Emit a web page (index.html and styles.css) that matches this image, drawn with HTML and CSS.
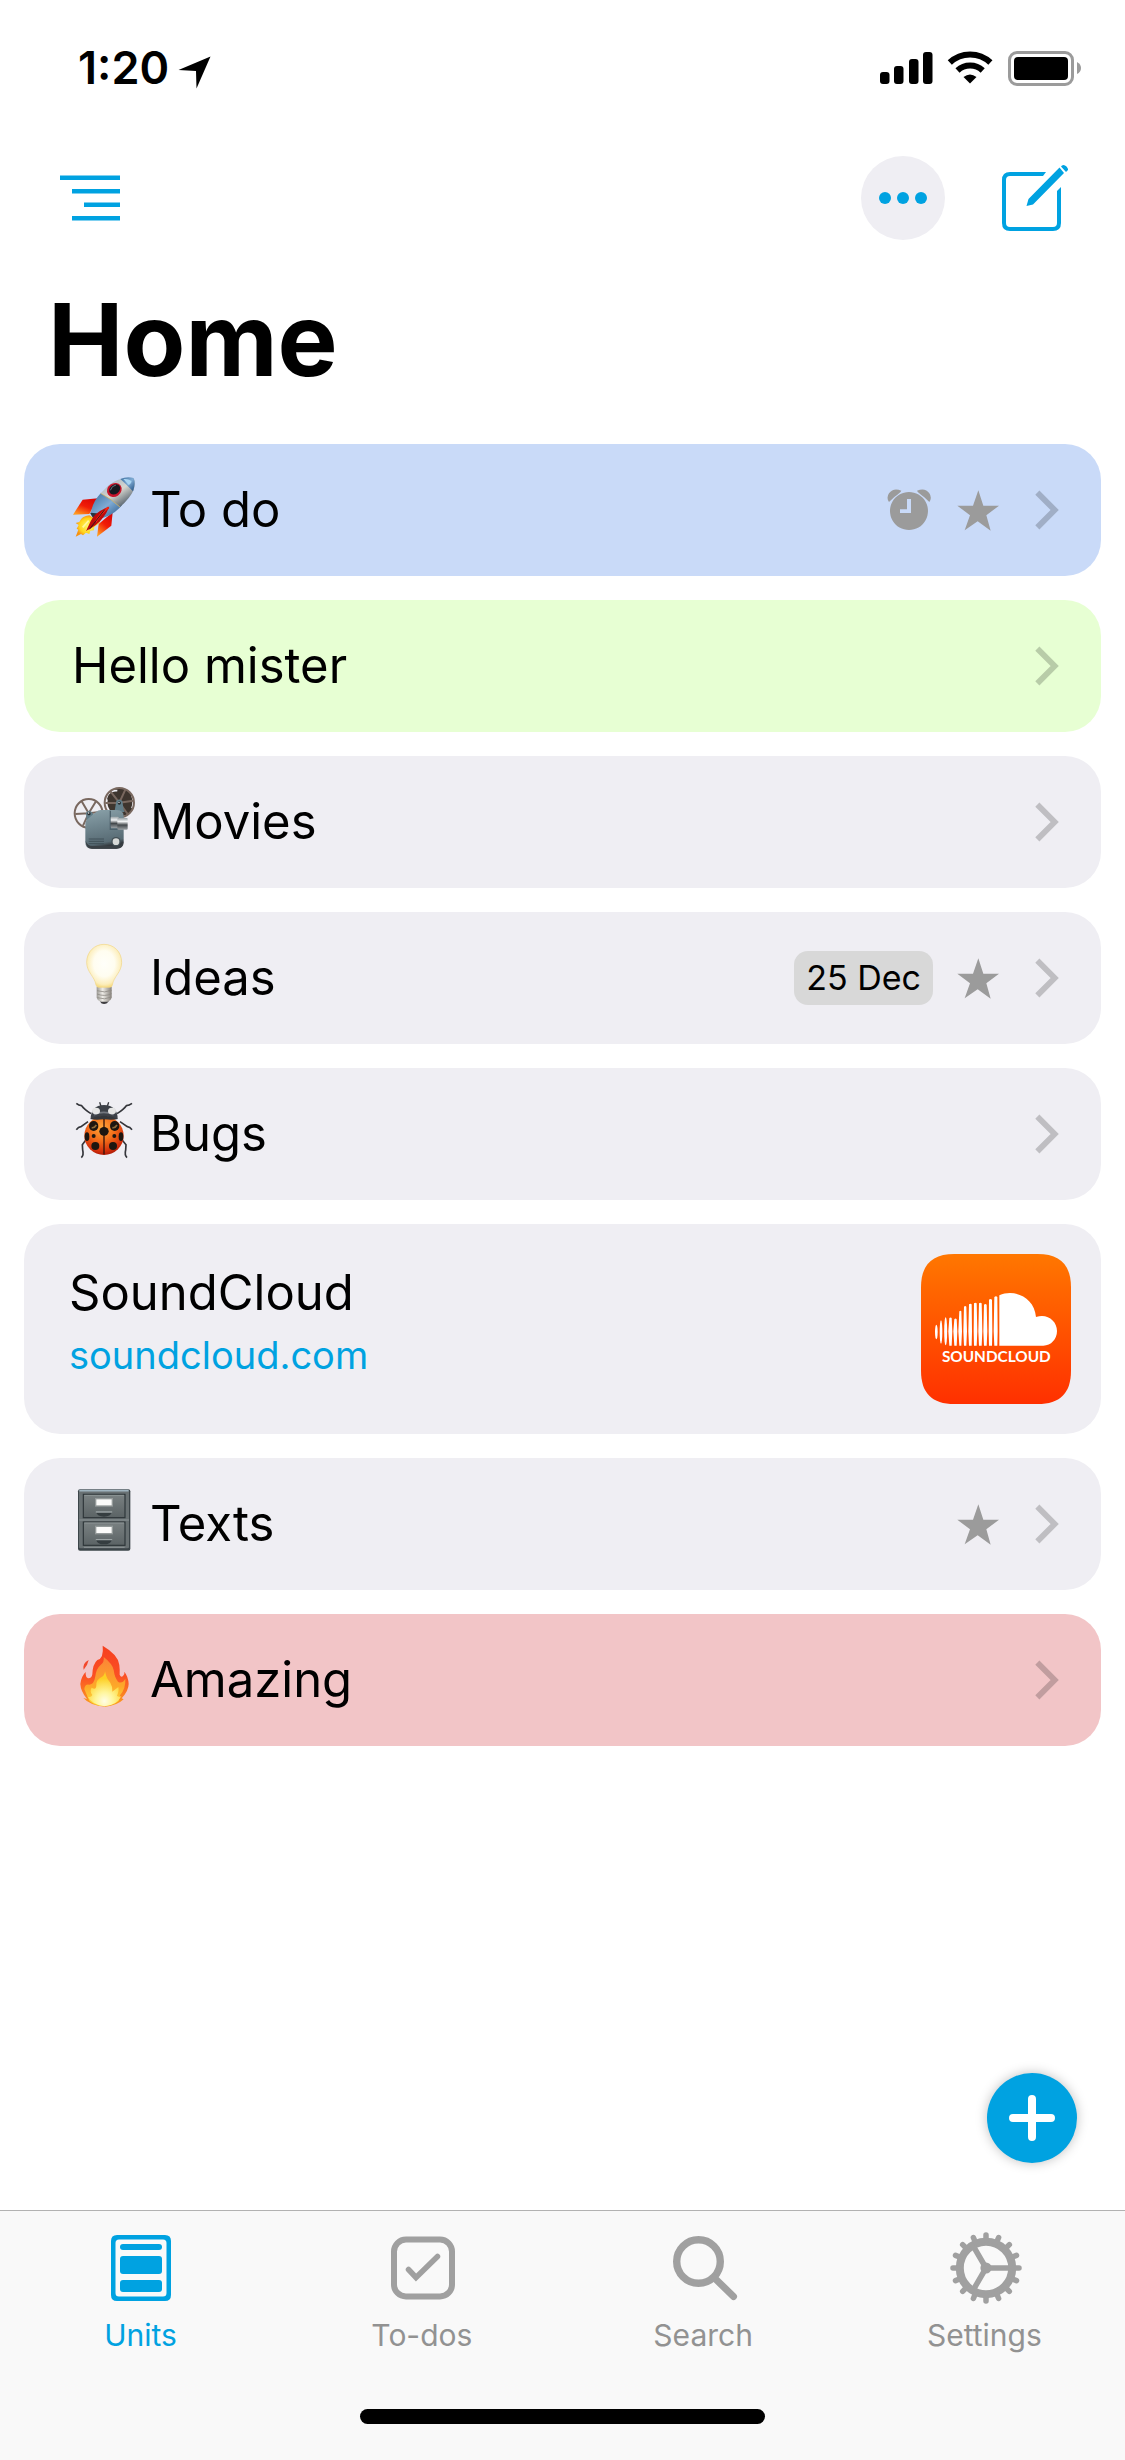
FILE: index.html
```html
<!DOCTYPE html>
<html lang="en">
<head>
<meta charset="utf-8">
<meta name="viewport" content="width=device-width, initial-scale=1">
<title>Home</title>
<link rel="stylesheet" href="styles.css">
</head>
<body>
<svg class="defs" aria-hidden="true">
  <defs>
    <symbol id="chevron" viewBox="789 177 108 126"><path d="M832 188 L884 240 L832 292" fill="none" stroke="#000" stroke-opacity=".2" stroke-width="17.500"/></symbol>
    <symbol id="star" viewBox="591 177 126 126"><path d="M655 181 L670 227 H717 L679 256 L692 302 L653 274 L614 301 L630 256 L592 227 H639 Z" fill="#9b9b9b"/></symbol>
  </defs>
</svg>

<div class="status">
  <div class="status-side">
    <span class="time">1:20</span>
    <svg class="location" viewBox="178 48 33 41" role="img" aria-label="Location in use"><path d="M178.500 70 L210.500 56.500 L196.500 88.500 L196 71 Z"/></svg>
  </div>
  <svg class="indicators" viewBox="880 48 202 42" role="img" aria-label="Signal, Wi-Fi and battery">
    <rect x="880" y="73" width="9.500" height="12" rx="3"/>
    <rect x="894" y="67" width="9.500" height="18" rx="3"/>
    <rect x="909" y="60" width="9.500" height="25" rx="3"/>
    <rect x="923" y="53" width="9.500" height="32" rx="3"/>
    <g fill="none" stroke="#000" stroke-width="6">
      <path d="M949.800 63.500 A29.500 29.500 0 0 1 990.400 63.500"/>
      <path d="M957.500 71.500 A18.400 18.400 0 0 1 982.700 71.500"/>
    </g>
    <path d="M963.500 78 Q970 73 976.500 78 L970 84.500 Z"/>
    <rect x="1009.500" y="53.500" width="63" height="32" rx="7.500" fill="none" stroke="#9b9b9b" stroke-width="3"/>
    <rect x="1014" y="58" width="54" height="23" rx="4"/>
    <path d="M1077 63 Q1081 65 1081 69 Q1081 73 1077 75 Z" fill="#9b9b9b"/>
  </svg>
</div>

<header>
  <div class="toolbar">
    <button class="icon-button" type="button" aria-label="Outline">
      <svg class="outline" viewBox="0 0 60 46" fill="#00a2e1"><path d="M0 0.500h60V5H0zM12 14h48v4.500H12zM24 27.500h36V32H24zM12 41h48v4.500H12z"/></svg>
    </button>
    <div class="toolbar-end">
      <button class="icon-button more" type="button" aria-label="More">
        <svg viewBox="0 0 48 12" fill="#00a2e1"><circle cx="6" cy="6" r="6"/><circle cx="24" cy="6" r="6"/><circle cx="42" cy="6" r="6"/></svg>
      </button>
      <button class="icon-button" type="button" aria-label="Compose">
        <svg class="compose" viewBox="1002 164 67 68">
          <path d="M1046 172 H1010 Q1002 172 1002 180 V223 Q1002 231 1010 231 H1053 Q1061 231 1061 223 V187 L1057 191 V223 Q1057 227 1053 227 H1010 Q1006 227 1006 223 V180 Q1006 176 1010 176 H1043 Z" fill="#00a2e1"/>
          <path d="M1026.500 206 L1028.500 199 L1059.500 167.500 L1064 173 L1033 204.500 Z M1061 166.500 L1062 165.500 Q1064 164 1066.500 166.500 Q1069 169.500 1067.500 170.500 L1066 172 Z" fill="#00a2e1"/>
        </svg>
      </button>
    </div>
  </div>
  <h1>Home</h1>
</header>

<main>
<ul class="units">
  <li><a class="unit blue" href="#todo">
    <svg class="emoji" viewBox="216 132 192 216" aria-hidden="true">
      <defs>
        <linearGradient id="rb" x1="0" y1="0" x2=".7" y2=".9"><stop offset="0" stop-color="#5b7e9e"/><stop offset=".35" stop-color="#b9c3c9"/><stop offset=".6" stop-color="#d6d6cf"/><stop offset="1" stop-color="#5c6873"/></linearGradient>
        <linearGradient id="rm" x1="0" y1="0" x2="1" y2="1"><stop offset="0" stop-color="#3c6f9f"/><stop offset=".5" stop-color="#7fabd4"/><stop offset="1" stop-color="#1f4d80"/></linearGradient>
        <linearGradient id="rf" x1=".8" y1="0" x2=".2" y2="1"><stop offset="0" stop-color="#d90606"/><stop offset=".5" stop-color="#f11c08"/><stop offset="1" stop-color="#ff9c20"/></linearGradient>
        <radialGradient id="ry"><stop offset="0" stop-color="#fff76a"/><stop offset=".7" stop-color="#ffd51c"/><stop offset="1" stop-color="#f69113"/></radialGradient>
      </defs>
      <path d="M294 205 L248 209 L219 254 L268 252 Z" fill="url(#rf)"/>
      <path d="M338 247 L334 287 L291 320 L296 282 Z" fill="url(#rf)"/>
      <path d="M302 190 Q276 218 272 252 Q280 268 300 266 Q338 258 366 226 Z" fill="url(#rm)"/>
      <path d="M270 248 l20 2 l14 18 l-18 8 Z" fill="#29343d"/>
      <path d="M268 256 Q245 258 238 276 L227 279 L236 285 L230 296 L235 299 L227 320 L243 312 L249 316 L258 308 L268 312 L271 302 L282 301 L283 291 L298 279 L303 264 L289 270 Z" fill="url(#ry)"/>
      <path d="M248 292 l18 -20 M260 300 l22 -22" stroke="#fff8a0" stroke-width="5"/>
      <path d="M401 144 Q360 138 326 166 L302 190 Q340 211 360 231 Q390 205 401 180 Q408 158 401 144Z" fill="url(#rb)"/>
      <path d="M401 144 Q380 139 361 147 Q376 161 399 184 Q408 158 401 144Z" fill="url(#rm)"/>
      <path d="M370 147 Q388 145 395 155 Q391 163 386 165Z" fill="#a8d4f2"/>
      <path d="M302 190 Q338 210 360 231" fill="none" stroke="#cfae60" stroke-width="2.500"/>
      <ellipse cx="343" cy="180" rx="23" ry="20" fill="#c8142b" transform="rotate(-35 343 180)"/>
      <ellipse cx="344" cy="178" rx="18" ry="14" fill="#16191f" transform="rotate(-35 344 178)"/>
      <path d="M331 181 Q335 167 348 165" fill="none" stroke="#62727e" stroke-width="3"/>
      <path d="M328 230 Q283 246 272 274 L258 303 Q294 285 310 262 Q322 246 328 230Z" fill="#bf0a0a"/>
      <path d="M326 232 Q300 250 287 276" fill="none" stroke="#f32412" stroke-width="6"/>
      <path d="M314 239 L268 298" stroke="#34191c" stroke-width="3"/>
    </svg>
    <span class="name">To do</span>
    <svg class="alarm" viewBox="381 171 138 138" role="img" aria-label="Reminder" fill="#9b9b9b">
      <path fill-rule="evenodd" d="M447 186 A57 57 0 1 1 446.900 186 Z M441 207 V238 H420 V249 H453 V207 Z"/>
      <path d="M387 216 Q378 203 387 190 Q400 172 424 182 Q421 188 403 201 Z M508 216 Q517 203 508 190 Q496 172 471 182 Q474 188 492 201 Z"/>
    </svg>
    <svg class="star" role="img" aria-label="Favourite"><use href="#star"/></svg>
    <svg class="chevron" aria-hidden="true"><use href="#chevron"/></svg>
  </a></li>

  <li><a class="unit green" href="#hello">
    <span class="name">Hello mister</span>
    <svg class="chevron" aria-hidden="true"><use href="#chevron"/></svg>
  </a></li>

  <li><a class="unit" href="#movies">
    <svg class="emoji" viewBox="216 138 192 216" aria-hidden="true">
      <defs>
        <linearGradient id="pb" x1="0" y1="0" x2=".2" y2="1"><stop offset="0" stop-color="#8ba2aa"/><stop offset=".45" stop-color="#70868f"/><stop offset=".9" stop-color="#586b74"/><stop offset="1" stop-color="#34393e"/></linearGradient>
        <linearGradient id="pl" x1="0" y1="0" x2="0" y2="1"><stop offset="0" stop-color="#98a1a5"/><stop offset=".3" stop-color="#f0f2f3"/><stop offset=".6" stop-color="#43484b"/><stop offset="1" stop-color="#9aa0a3"/></linearGradient>
      </defs>
      <ellipse cx="361" cy="187" rx="41" ry="42" fill="#3e352e"/>
      <path d="M322 163 Q336 150 352 152 M327 211 Q317 196 321 178 M396 166 Q403 184 396 205" stroke="#efeef3" stroke-width="5" fill="none"/>
      <g fill="none" stroke="#79685f" stroke-width="6">
        <circle cx="358" cy="188" r="44"/><path d="M358 188 L332 155 M358 188 L376 149 M358 188 L400 182 M358 188 L383 222 M358 188 L316 189"/>
        <ellipse cx="266" cy="220" rx="42" ry="43"/><path d="M266 220 L245 184 M266 220 L288 184 M266 220 L307 215 M266 220 L226 222 M266 220 L249 257"/>
      </g>
      <path d="M343 218 L349 183 Q357 174 367 183 L371 209 L374 216 Z" fill="#627d88"/>
      <path d="M258 218 Q270 206 278 220 L284 228 L260 242 Z" fill="#627d88"/>
      <path d="M256 250 Q256 242 263 237 L289 215 Q294 210 302 210 H350 Q371 212 371 228 V306 Q371 326 350 326 H275 Q256 326 256 306 Z" fill="url(#pb)"/>
      <path d="M257 303 Q258 326 277 326 H348 Q370 325 371 304 Q366 318 350 318 H277 Q263 318 257 303Z" fill="#3a4045"/>
      <path d="M331 212 V268 H358" fill="none" stroke="#4d616b" stroke-width="4"/>
      <rect x="332" y="230" width="24" height="34" rx="3" fill="url(#pl)"/>
      <rect x="352" y="234" width="31" height="35" rx="3" fill="url(#pl)"/>
      <path d="M266 297h46M266 304h46M266 311h46" stroke="#415158" stroke-width="3"/>
      <circle cx="348" cy="305" r="14" fill="#445056"/><circle cx="348" cy="305" r="10" fill="#d7d9d7"/>
      <circle cx="358" cy="189" r="5" fill="#2a3033"/><circle cx="267" cy="221" r="5" fill="#2a3033"/>
      <circle cx="357" cy="187" r="2" fill="#fff"/><circle cx="266" cy="219" r="2" fill="#fff"/>
    </svg>
    <span class="name">Movies</span>
    <svg class="chevron" aria-hidden="true"><use href="#chevron"/></svg>
  </a></li>

  <li><a class="unit" href="#ideas">
    <svg class="emoji" viewBox="216 606 192 216" aria-hidden="true">
      <defs>
        <radialGradient id="lg" cx=".5" cy=".45" r=".6"><stop offset="0" stop-color="#fffffa"/><stop offset=".5" stop-color="#fffdf0"/><stop offset=".8" stop-color="#fceebc"/><stop offset="1" stop-color="#f3d060"/></radialGradient>
        <linearGradient id="lb"><stop offset="0" stop-color="#9b9994"/><stop offset=".4" stop-color="#eeece7"/><stop offset="1" stop-color="#858079"/></linearGradient>
      </defs>
      <path d="M299 782 L304 790 Q312 794 321 790 L327 782Z" fill="#3e3d40"/>
      <path d="M290 740 H335 V773 Q334 780 323 785 H302 Q291 780 290 773 Z" fill="url(#lb)"/>
      <path d="M291 752 Q314 760 335 751 M291 762 Q314 771 335 761 M292 773 Q314 781 334 771" fill="none" stroke="#8f8b85" stroke-width="2.500"/>
      <path d="M312 613 C341 613 365 635 365 667 C365 697 341 709 337 735 Q336 742 329 742 H296 Q290 742 288 735 C284 709 260 697 260 667 C260 635 284 613 312 613Z" fill="url(#lg)" stroke="#f2d787" stroke-width="2"/>
    </svg>
    <span class="name">Ideas</span>
    <time class="date">25 Dec</time>
    <svg class="star" role="img" aria-label="Favourite"><use href="#star"/></svg>
    <svg class="chevron" aria-hidden="true"><use href="#chevron"/></svg>
  </a></li>

  <li><a class="unit" href="#bugs">
    <svg class="emoji" viewBox="216 144 192 216" aria-hidden="true">
      <defs>
        <radialGradient id="bb" cx=".45" cy=".3" r=".75"><stop offset="0" stop-color="#ffa83c"/><stop offset=".45" stop-color="#f36c19"/><stop offset=".8" stop-color="#d4300b"/><stop offset="1" stop-color="#9e1206"/></radialGradient>
      </defs>
      <g fill="none" stroke="#35363b" stroke-width="5">
        <path d="M229 160 Q236 166 245 167 Q253 178 273 191 M396 160 Q388 166 379 167 Q371 178 351 191"/>
        <path d="M229 239 Q235 231 243 230 L264 215 M396 239 Q390 231 382 230 L360 215"/>
        <path d="M244 323 Q252 315 248 300 L247 284 L257 271 M381 323 Q373 315 377 300 L378 284 L367 271"/>
        <path d="M299 157 l4 12 M326 157 l-4 12" stroke-width="4"/>
      </g>
      <path d="M272 207 Q272 167 312 165 Q353 167 353 207Z" fill="#3d4148"/>
      <path d="M282 194 Q311 180 341 194" fill="none" stroke="#73777f" stroke-width="5"/>
      <ellipse cx="312" cy="257" rx="59" ry="58" fill="url(#bb)"/>
      <path d="M270 207 Q312 187 354 207 Q340 211 312 208 Q285 211 270 207Z" fill="#34373c"/>
      <ellipse cx="288" cy="183" rx="12" ry="10" fill="#e5e5e5"/><ellipse cx="336" cy="183" rx="12" ry="10" fill="#e5e5e5"/>
      <path d="M312 207 V313" stroke="#35130a" stroke-width="4"/>
      <g fill="#1d1610">
        <ellipse cx="281" cy="228" rx="14" ry="15"/><ellipse cx="344" cy="228" rx="14" ry="15"/>
        <ellipse cx="312" cy="244" rx="14" ry="13"/>
        <ellipse cx="261" cy="260" rx="7" ry="13"/><ellipse cx="363" cy="260" rx="7" ry="13"/>
        <circle cx="281" cy="258" r="6"/><circle cx="343" cy="258" r="6"/>
        <ellipse cx="286" cy="288" rx="12" ry="12"/><ellipse cx="339" cy="288" rx="12" ry="12"/>
      </g>
      <path d="M275 233 q8 2 14 -8 M337 233 q8 2 14 -8" stroke="#8d6a38" stroke-width="5" fill="none"/>
    </svg>
    <span class="name">Bugs</span>
    <svg class="chevron" aria-hidden="true"><use href="#chevron"/></svg>
  </a></li>

  <li class="unit bookmark">
    <div class="bookmark-text">
      <span class="name">SoundCloud</span>
      <a class="link" href="#soundcloud">soundcloud.com</a>
    </div>
    <svg class="app-icon" viewBox="123 132 450 450" role="img" aria-label="SoundCloud app icon">
      <defs><linearGradient id="sc" x1="0" y1="0" x2="0" y2="1"><stop offset="0" stop-color="#ff7700"/><stop offset="1" stop-color="#ff3000"/></linearGradient></defs>
      <path d="M223 132 H473 C540 132 573 165 573 232 V482 C573 549 540 582 473 582 H223 C156 582 123 549 123 482 V232 C123 165 156 132 223 132Z" fill="url(#sc)"/>
      <g fill="#fff">
        <path d="M358 256 C403 236 463 262 468 321 C501 309 531 332 531 363 C531 387 513 407 490 407 H358 Z"/>
        <ellipse cx="169" cy="366" rx="4" ry="22"/>
        <ellipse cx="183" cy="366" rx="4" ry="35"/>
        <ellipse cx="197" cy="364" rx="4.500" ry="42"/>
        <path d="M208 324 q3.500 -3 7 0 l2 40 l-2 43 h-7 l-3 -43Z M223 328 q3.500 -5 7 0 l2 36 l-2 43 h-7 l-3 -43Z M238 304 q3 -4 6 0 l2 60 l-2 43 h-6 l-3 -43Z M252 290 q3.500 -4 7 0 l2 74 l-2 43 h-7 l-2 -43Z M267 283 q4 -4 8 0 l1 81 l-1 43 h-8 l-2 -43Z M282 280 q4 -4 8 0 l2 84 l-2 43 h-8 l-1 -43Z M297 280 q4 -4 8 0 l2 84 l-2 43 h-8 l-2 -43Z M312 284 q4 -4 8 0 l2 80 l-2 43 h-8 l-2 -43Z M327 269 q4 -4 9 0 l1 95 l-1 43 h-9 l-1 -43Z M343 261 q5 -4 9 0 l1 103 l-1 43 h-9 l-2 -43Z"/>
      </g>
      <text class="app-icon-name" x="349" y="456" text-anchor="middle">SOUNDCLOUD</text>
    </svg>
  </li>

  <li><a class="unit" href="#texts">
    <svg class="emoji" viewBox="216 144 192 216" aria-hidden="true">
      <defs>
        <linearGradient id="cd" x1="0" y1="0" x2="0" y2="1"><stop offset="0" stop-color="#7a8182"/><stop offset="1" stop-color="#5b6365"/></linearGradient>
      </defs>
      <rect x="234" y="148" width="157" height="184" rx="6" fill="#3c4549"/>
      <rect x="237" y="151" width="150" height="174" rx="4" fill="#697173"/>
      <path d="M238 152 H386" stroke="#9fb4bf" stroke-width="5"/>
      <g fill="url(#cd)" stroke="#2e3639" stroke-width="3.500"><rect x="250" y="163" width="125" height="70"/><rect x="250" y="246" width="125" height="70"/></g>
      <path d="M253 166h119M253 249h119" stroke="#8c9495" stroke-width="3"/>
      <path d="M238 240h149M252 322h122" stroke="#8d9597" stroke-width="3"/>
      <g fill="#fbfbfa" stroke="#949a9a" stroke-width="4"><rect x="287" y="176" width="50" height="22"/><rect x="287" y="259" width="50" height="22"/></g>
      <path d="M288 216h48q-4 14-24 14t-24-14zM288 299h48q-4 14-24 14t-24-14z" fill="#353d40"/>
      <path d="M289 216h46M289 299h46" stroke="#9ba3a4" stroke-width="4" stroke-linecap="round"/>
    </svg>
    <span class="name">Texts</span>
    <svg class="star" role="img" aria-label="Favourite"><use href="#star"/></svg>
    <svg class="chevron" aria-hidden="true"><use href="#chevron"/></svg>
  </a></li>

  <li><a class="unit red" href="#amazing">
    <svg class="emoji" viewBox="216 612 192 216" aria-hidden="true">
      <defs>
        <linearGradient id="fr" x1="0" y1="0" x2="0" y2="1"><stop offset="0" stop-color="#f6401f"/><stop offset=".5" stop-color="#fb5024"/><stop offset="1" stop-color="#fba21f"/></linearGradient>
        <linearGradient id="fo" x1="0" y1="0" x2="0" y2="1"><stop offset="0" stop-color="#fb8337"/><stop offset=".6" stop-color="#fda829"/><stop offset="1" stop-color="#fee13a"/></linearGradient>
        <radialGradient id="fy" cx=".5" cy=".85" r=".65"><stop offset="0" stop-color="#fffde6"/><stop offset=".4" stop-color="#fff59a"/><stop offset="1" stop-color="#fdcf24"/></radialGradient>
      </defs>
      <path d="M266 660 Q263 676 251 689 Q247 669 266 660Z" fill="#f3482b"/>
      <path d="M308 617 Q356 645 358 675 Q360 692 359 704 Q363 714 369 708 Q375 704 373 695 Q385 710 386 732 Q386 752 365 775 L371 778 Q351 797 316 800 Q270 797 250 774 L261 777 Q242 754 241 732 Q243 710 257 696 Q256 712 264 715 Q275 716 277 703 Q278 672 292 660 Q312 655 308 617Z" fill="url(#fr)"/>
      <path d="M311 651 Q337 671 341 690 Q344 713 354 725 Q366 733 376 716 Q378 744 360 766 L356 783 Q339 797 314 798 Q283 797 268 782 L253 748 Q254 732 267 734 Q282 735 286 709 Q289 686 301 676 Q314 666 311 651Z" fill="url(#fo)"/>
      <path d="M315 694 Q319 716 331 728 Q338 739 337 755 L355 741 Q358 752 351 767 Q355 772 364 769 Q350 796 314 799 Q278 795 263 770 Q273 774 277 765 Q268 754 275 743 Q289 752 289 735 Q288 722 300 714 Q315 708 315 694Z" fill="url(#fy)"/>
    </svg>
    <span class="name">Amazing</span>
    <svg class="chevron" aria-hidden="true"><use href="#chevron"/></svg>
  </a></li>
</ul>
</main>

<button class="add" type="button" aria-label="Add unit">
  <svg viewBox="0 0 46 46" fill="none" stroke="#fff" stroke-width="8" stroke-linecap="round"><path d="M23 4V42M4 23H42"/></svg>
</button>

<footer>
  <nav class="tabs">
    <a class="tab active" href="#units">
      <svg viewBox="105 2232 72 72" fill="#00a2e1" aria-hidden="true">
        <path fill-rule="evenodd" d="M117 2235 H165 Q171 2235 171 2241 V2295 Q171 2301 165 2301 H117 Q111 2301 111 2295 V2241 Q111 2235 117 2235Z M119 2239.500 Q115.500 2239.500 115.500 2243 V2293 Q115.500 2296.500 119 2296.500 H163 Q166.500 2296.500 166.500 2293 V2243 Q166.500 2239.500 163 2239.500Z"/>
        <rect x="120" y="2244" width="42" height="6" rx="3"/><rect x="120" y="2256" width="42" height="18" rx="3"/><rect x="120" y="2280" width="42" height="12" rx="3"/>
      </svg>
      Units
    </a>
    <a class="tab" href="#todos">
      <svg viewBox="386 2232 72 72" fill="none" stroke="#a0a0a0" aria-hidden="true">
        <rect x="394" y="2239.500" width="58" height="57" rx="12" stroke-width="6"/>
        <path d="M408.500 2269.500 L416 2277.500 L437.500 2256.500" stroke-width="5.500" stroke-linecap="round"/>
      </svg>
      To-dos
    </a>
    <a class="tab" href="#search">
      <svg viewBox="667 2232 72 72" fill="none" stroke="#a0a0a0" aria-hidden="true">
        <circle cx="698.500" cy="2261.500" r="21.800" stroke-width="7.400"/><path d="M715 2278.500 L733.500 2296.500" stroke-width="7" stroke-linecap="round"/>
      </svg>
      Search
    </a>
    <a class="tab" href="#settings">
      <svg viewBox="949 2232 72 72" overflow="visible" fill="none" stroke="#a0a0a0" aria-hidden="true">
        <circle cx="987" cy="2268" r="26.200" stroke-width="8"/>
        <circle cx="987" cy="2268" r="2.800" stroke-width="5.600"/>
        <path d="M987 2268 H1011 M987 2268 L974.500 2246.500 M987 2268 L974.500 2289.500" stroke-width="5.500"/>
        <g stroke-width="5.500" stroke-linecap="round">
          <path id="tooth" d="M987 2240 V2235 M987 2296 V2301"/>
          <use href="#tooth" transform="rotate(22.500 987 2268)"/><use href="#tooth" transform="rotate(45 987 2268)"/><use href="#tooth" transform="rotate(67.500 987 2268)"/><use href="#tooth" transform="rotate(90 987 2268)"/><use href="#tooth" transform="rotate(112.500 987 2268)"/><use href="#tooth" transform="rotate(135 987 2268)"/><use href="#tooth" transform="rotate(157.500 987 2268)"/>
        </g>
      </svg>
      Settings
    </a>
  </nav>
  <div class="home-indicator"></div>
</footer>
</body>
</html>
```
FILE: styles.css
```css
* { box-sizing: border-box; }

body {
  position: relative;
  display: flex;
  flex-direction: column;
  min-height: 100vh;
  margin: 0;
  background: #fff;
  color: #000;
  font-family: Inter, "Liberation Sans", sans-serif;
}

svg { display: block; flex: none; }
a { color: inherit; text-decoration: none; }
button { border: 0; padding: 0; font: inherit; cursor: pointer; }

.defs { position: absolute; width: 0; height: 0; }

/* Status bar */
.status {
  display: flex;
  align-items: center;
  justify-content: space-between;
  padding: 40px 43px 36px 78px;
}
.status-side { display: flex; align-items: center; gap: 9px; }
.time { font-size: 45px; line-height: 56px; font-weight: 600; }
.location { width: 33px; height: 41px; }
.indicators { width: 202px; height: 42px; }

/* Toolbar and title */
.toolbar {
  display: flex;
  align-items: center;
  justify-content: space-between;
  padding: 24px 56px 24px 60px;
}
.toolbar-end { display: flex; align-items: center; gap: 57px; }
.icon-button { display: flex; align-items: center; justify-content: center; background: none; }
.outline { width: 60px; height: 46px; }
.more { width: 84px; height: 84px; border-radius: 50%; background: #efeef3; }
.more svg { width: 48px; height: 12px; }
.compose { width: 67px; height: 68px; }
h1 {
  margin: 15px 48px 45px;
  font-size: 101px;
  line-height: 120px;
  font-weight: 700;
}

/* List of units */
main { flex: 1; }
.units {
  display: flex;
  flex-direction: column;
  gap: 24px;
  margin: 0;
  padding: 0 24px 48px;
  list-style: none;
}
.unit {
  display: flex;
  align-items: center;
  min-height: 132px;
  padding: 0 42px 0 48px;
  border-radius: 36px;
  background: #efeef3;
}
.blue { background: #c9daf8; }
.green { background: #e7ffd3; }
.red { background: #f2c5c7; }
.name { flex: 1; font-size: 49px; line-height: 60px; }
.emoji { width: 64px; height: 72px; margin-right: 14px; }
.alarm { width: 46px; height: 46px; }
.star { width: 42px; height: 42px; margin: 0 24px; }
.chevron { width: 36px; height: 42px; }
.date {
  padding: 0 12px;
  border-radius: 14px;
  background: #d8d8d8;
  font-size: 34px;
  line-height: 54px;
}

.bookmark {
  align-items: flex-start;
  justify-content: space-between;
  padding: 30px 30px 30px 45px;
}
.bookmark-text { display: flex; flex-direction: column; gap: 8px; padding-top: 9px; }
.link { color: #00a2e1; font-size: 38px; line-height: 48px; }
.app-icon { width: 150px; height: 150px; }
.app-icon-name { fill: #fff; font-family: Lato, sans-serif; font-size: 46px; font-weight: 700; }

/* Floating add button */
.add {
  position: absolute;
  right: 48px;
  bottom: 297px;
  display: flex;
  align-items: center;
  justify-content: center;
  width: 90px;
  height: 90px;
  border-radius: 50%;
  background: #00a2e1;
  box-shadow: 0 0 12px rgba(0, 0, 0, .25);
}
.add svg { width: 46px; height: 46px; }

/* Tab bar */
footer { padding: 21px 0 36px; border-top: 1px solid #b2b2b2; background: #f9f9f9; }
.tabs { display: grid; grid-template-columns: repeat(4, 1fr); }
.tab {
  display: flex;
  flex-direction: column;
  align-items: center;
  gap: 13px;
  color: #929292;
  font-size: 30px;
  line-height: 36px;
}
.tab svg { width: 72px; height: 72px; }
.active { color: #00a2e1; }
.home-indicator {
  width: 36%;
  height: 15px;
  margin: 56px auto 0;
  border-radius: 8px;
  background: #000;
}
```
